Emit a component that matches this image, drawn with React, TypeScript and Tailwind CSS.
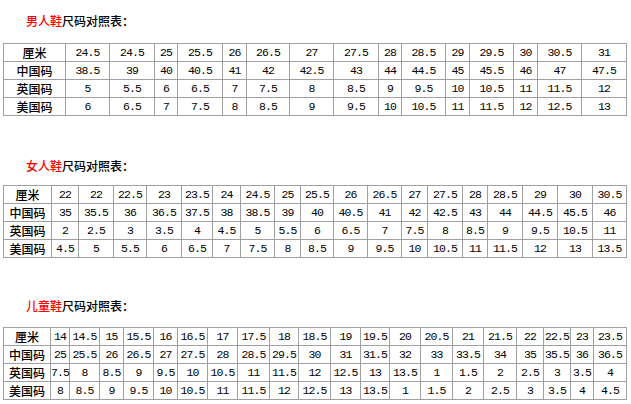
import React from 'react'

interface SizeTableProps {
  cols: number[]
  rows: { name: string; values: string[] }[]
}

const cjk = '"Noto Sans CJK SC", sans-serif'
const mono = '"Liberation Mono", "Noto Sans CJK SC", monospace'

const men = {
  label: '男人鞋',
  cols: [3, 65, 109, 154, 177, 222, 246, 289, 333, 378, 401, 445, 469, 513, 537, 581, 626],
  rows: [
    { name: '厘米', values: '24.5 24.5 25 25.5 26 26.5 27 27.5 28 28.5 29 29.5 30 30.5 31'.split(' ') },
    { name: '中国码', values: '38.5 39 40 40.5 41 42 42.5 43 44 44.5 45 45.5 46 47 47.5'.split(' ') },
    { name: '英国码', values: '5 5.5 6 6.5 7 7.5 8 8.5 9 9.5 10 10.5 11 11.5 12'.split(' ') },
    { name: '美国码', values: '6 6.5 7 7.5 8 8.5 9 9.5 10 10.5 11 11.5 12 12.5 13'.split(' ') },
  ],
}

const women = {
  label: '女人鞋',
  cols: [3, 51, 78, 113, 146, 181, 212, 240, 274, 300, 333, 367, 401, 427, 462, 487, 522, 557, 592, 626],
  rows: [
    { name: '厘米', values: '22 22 22.5 23 23.5 24 24.5 25 25.5 26 26.5 27 27.5 28 28.5 29 30 30.5'.split(' ') },
    { name: '中国码', values: '35 35.5 36 36.5 37.5 38 38.5 39 40 40.5 41 42 42.5 43 44 44.5 45.5 46'.split(' ') },
    { name: '英国码', values: '2 2.5 3 3.5 4 4.5 5 5.5 6 6.5 7 7.5 8 8.5 9 9.5 10.5 11'.split(' ') },
    { name: '美国码', values: '4.5 5 5.5 6 6.5 7 7.5 8 8.5 9 9.5 10 10.5 11 11.5 12 13 13.5'.split(' ') },
  ],
}

const kids = {
  label: '儿童鞋',
  cols: [3, 50, 69, 99, 123, 153, 177, 207, 237, 269, 298, 330, 360, 389, 420, 452, 483, 516, 543, 570, 593, 626],
  rows: [
    { name: '厘米', values: '14 14.5 15 15.5 16 16.5 17 17.5 18 18.5 19 19.5 20 20.5 21 21.5 22 22.5 23 23.5'.split(' ') },
    { name: '中国码', values: '25 25.5 26 26.5 27 27.5 28 28.5 29.5 30 31 31.5 32 33 33.5 34 35 35.5 36 36.5'.split(' ') },
    { name: '英国码', values: '7.5 8 8.5 9 9.5 10 10.5 11 11.5 12 12.5 13 13.5 1 1.5 2 2.5 3 3.5 4'.split(' ') },
    { name: '美国码', values: '8 8.5 9 9.5 10 10.5 11 11.5 12 12.5 13 13.5 1 1.5 2 2.5 3 3.5 4 4.5'.split(' ') },
  ],
}

function Title({ label }: { label: string }) {
  return (
    <div className="pl-[26px] text-[12px] leading-[12px] font-medium text-black" style={{ fontFamily: cjk }}>
      <span className="text-[#ff0000]">{label}</span>尺码对照表：
    </div>
  )
}

function SizeTable({ cols, rows }: SizeTableProps) {
  const widths = cols.slice(1).map((c, i) => c - cols[i])
  return (
    <table
      className="ml-[3px] table-fixed border-collapse text-black"
      style={{ width: cols[cols.length - 1] - cols[0] + 1 }}
    >
      <colgroup>
        {widths.map((w, i) => (
          <col key={i} style={{ width: w }} />
        ))}
      </colgroup>
      <tbody>
        {rows.map((row) => (
          <tr key={row.name} className="h-[18px]">
            <td
              className="border border-[#a0a0a0] p-0 text-center text-[12px] leading-[12px] font-medium"
              style={{ fontFamily: cjk }}
            >
              {row.name}
            </td>
            {row.values.map((v, i) => (
              <td
                key={i}
                className="whitespace-nowrap border border-[#a0a0a0] p-0 text-center text-[11.5px] leading-[12px] tracking-[-0.9px]"
                style={{ fontFamily: mono }}
              >
                {v}
              </td>
            ))}
          </tr>
        ))}
      </tbody>
    </table>
  )
}

export default function App() {
  return (
    <div className="h-[404px] w-[631px] overflow-hidden bg-white pt-[15px]">
      <Title label={men.label} />
      <div className="mt-[16px]">
        <SizeTable cols={men.cols} rows={men.rows} />
      </div>
      <div className="mt-[44px]">
        <Title label={women.label} />
      </div>
      <div className="mt-[13px]">
        <SizeTable cols={women.cols} rows={women.rows} />
      </div>
      <div className="mt-[42px]">
        <Title label={kids.label} />
      </div>
      <div className="mt-[15px]">
        <SizeTable cols={kids.cols} rows={kids.rows} />
      </div>
    </div>
  )
}
